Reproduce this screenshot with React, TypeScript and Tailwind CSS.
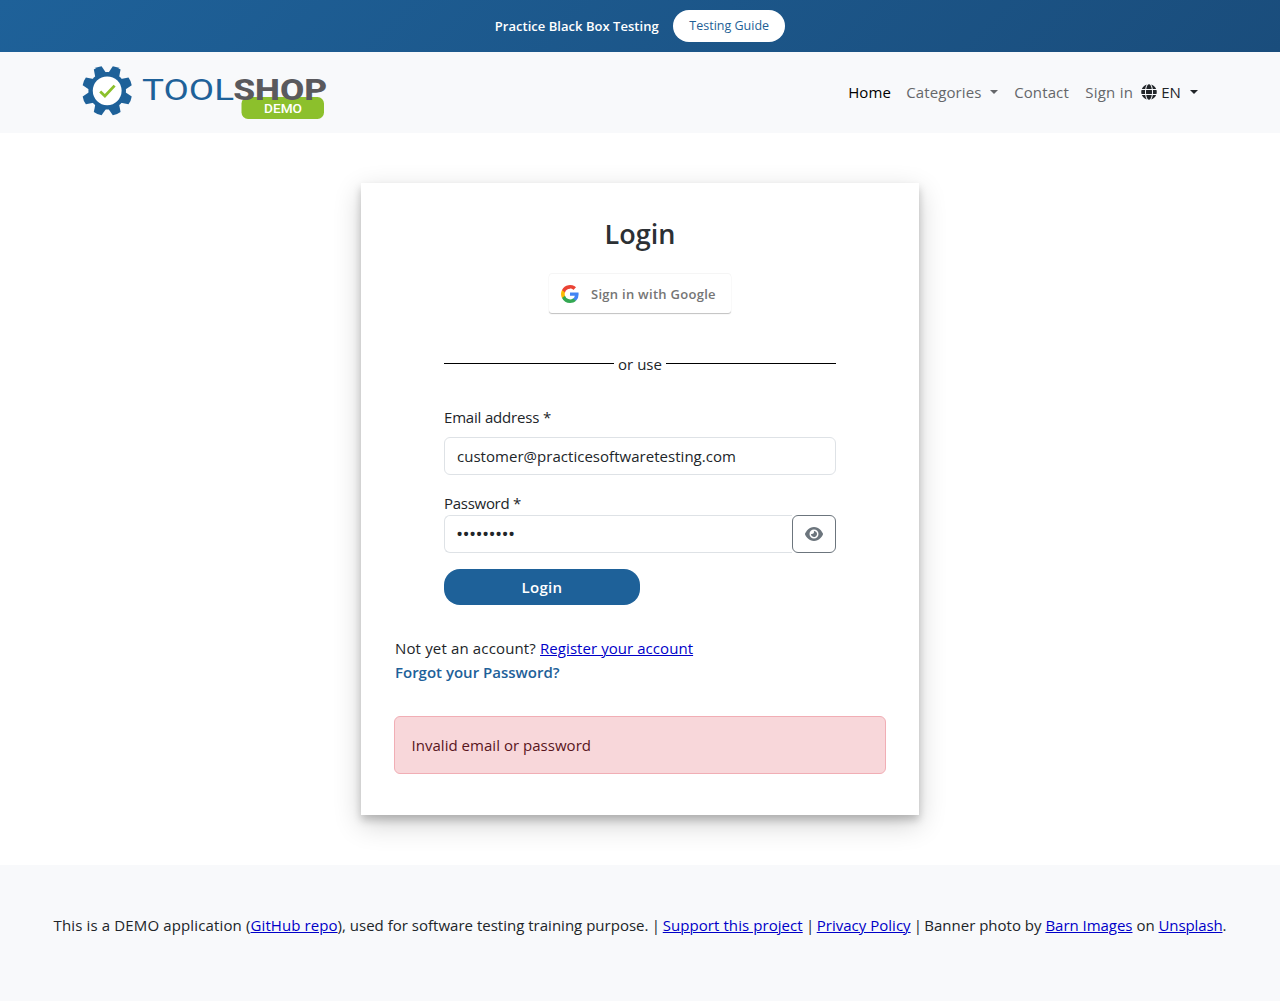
import { FaGlobe } from "react-icons/fa";
import { FaEye } from "react-icons/fa6";

const linkClass = "text-[#0000c8] underline decoration-1 underline-offset-1";

function Logo() {
  return (
    <svg width="246" height="56" viewBox="82 65 246 56" aria-label="Toolshop demo" className="block">
      <g fill="#1e6199" transform="translate(107.2 90.8)">
        {[22.5, 67.5, 112.5, 157.5, 202.5, 247.5, 292.5, 337.5].map((angle) => (
          <path key={angle} d="M-6-16 -4.2-24.8Q0-25.9 4.2-24.8L6-16Z" transform={`rotate(${angle})`} />
        ))}
        <circle r="18.8" />
        <circle r="14.4" fill="#fff" />
        <path d="M-7 .7 -2.3 5.2 7.4-5.2" fill="none" stroke="#8cc02c" strokeWidth="2.8" />
      </g>
      <rect x="241.5" y="97" width="82.5" height="22" rx="6.5" fill="#8cc02c" />
      <text x="142" y="100.3" fontSize="29" fontFamily="Roboto, sans-serif" fill="#1e6199" textLength="92" lengthAdjust="spacingAndGlyphs">TOOL</text>
      <text x="233.2" y="100.3" fontSize="29" fontWeight="800" fontFamily="Roboto, sans-serif" fill="#5a595d" textLength="94" lengthAdjust="spacingAndGlyphs">SHOP</text>
      <text x="264" y="112.5" fontSize="13.4" fontWeight="500" fontFamily="Roboto, sans-serif" fill="#fff" textLength="38" lengthAdjust="spacingAndGlyphs">DEMO</text>
    </svg>
  );
}

function GoogleMark() {
  return (
    <svg width="18" height="18" viewBox="0 0 18 18">
      <path d="M17.6 9.2l-.1-1.8H9v3.4h4.8C13.6 12 13 13 12 13.6v2.2h3a8.8 8.8 0 0 0 2.6-6.6z" fill="#4285F4" />
      <path d="M9 18c2.4 0 4.5-.8 6-2.2l-3-2.2a5.4 5.4 0 0 1-8-2.9H1V13a9 9 0 0 0 8 5z" fill="#34A853" />
      <path d="M4 10.7a5.4 5.4 0 0 1 0-3.4V5H1a9 9 0 0 0 0 8l3-2.3z" fill="#FBBC05" />
      <path d="M9 3.6c1.3 0 2.5.4 3.4 1.3L15 2.3A9 9 0 0 0 1 5l3 2.4a5.4 5.4 0 0 1 5-3.7z" fill="#EA4335" />
    </svg>
  );
}

function Caret() {
  return <span className="inline-block h-0 w-0 border-x-[4.8px] border-t-[4.8px] border-x-transparent" />;
}

export default function App() {
  return (
    <div className="flex min-h-[1001px] flex-col bg-white font-['Open_Sans',sans-serif] text-[15px] leading-6 text-[#212529]">
      <div className="flex h-[52px] items-center justify-center gap-[14.5px] bg-[linear-gradient(135deg,#1e6199_0%,#1a4d7c_100%)] text-[13px]">
        <span className="font-semibold tracking-[0.03px] text-white">Practice Black Box Testing</span>
        <a className="flex h-8 w-28 items-center justify-center rounded-full bg-white text-[12.5px] font-medium text-[#1e5f96]">Testing Guide</a>
      </div>

      <header className="h-[81px] bg-[#f8f9fb]">
        <div className="mx-auto flex w-[1116px] items-center justify-between">
          <div className="pt-[13px]"><Logo /></div>
          <nav className="flex items-center pt-[11px] text-[#65676a]">
            <a className="w-[58px] tracking-[0.1px] text-black">Home</a>
            <a className="flex w-[108px] items-center gap-[8px] tracking-[0.12px]">Categories <Caret /></a>
            <a className="w-[71px] tracking-[0.12px]">Contact</a>
            <a className="w-14 tracking-[0.25px]">Sign in</a>
            <button className="flex items-center text-[#212529]">
              <FaGlobe size={16} />
              <span className="ml-1 mr-[9px] tracking-[0.1px]">EN</span>
              <Caret />
            </button>
          </nav>
        </div>
      </header>

      <main className="flex h-[732px] justify-center pt-[50px]">
        <section className="h-[632px] w-[558px] bg-white px-[33px] shadow-[0_5px_8px_0_rgba(0,0,0,0.2),0_9px_26px_0_rgba(0,0,0,0.19)]">
          <h3 className="pt-[34px] text-center text-[27px] font-semibold leading-[34px] text-[#2c3034]">Login</h3>
          <button className="mx-auto mt-[23px] flex h-[39px] w-[182px] items-center rounded-[3px] bg-white pl-3 text-[13px] font-semibold tracking-[0.28px] text-[#757575] shadow-[0_-1px_0_rgba(0,0,0,0.04),0_1px_1px_rgba(0,0,0,0.25)]">
            <GoogleMark />
            <span className="ml-3 whitespace-nowrap">Sign in with Google</span>
          </button>

          <form className="mx-auto w-[392px] pt-[39px]">
            <div className="flex h-6 items-center justify-between">
              <span className="mb-px h-px w-[170px] bg-black" />
              <span>or use</span>
              <span className="mb-px h-px w-[170px] bg-black" />
            </div>
            <label className="mt-[29px] block tracking-[-0.18px]">Email address *</label>
            <div className="mt-2 flex h-[38px] items-center rounded-md border border-[#dee2e6] px-3 tracking-[0.03px]">customer@practicesoftwaretesting.com</div>
            <label className="mt-4 block h-6 tracking-[-0.28px]">Password *</label>
            <div className="flex h-[38px]">
              <div className="flex flex-1 items-center rounded-l-md border border-r-0 border-[#dee2e6] px-[11px] text-[19px] tracking-[-0.65px]">•••••••••</div>
              <button type="button" className="flex w-11 items-center justify-center rounded-md border border-[#6c757d] text-[#6c757d]">
                <FaEye size={18} className="h-4 w-[18px]" />
              </button>
            </div>
            <button type="button" className="mt-4 flex h-9 w-[196px] items-center justify-center rounded-2xl bg-[#1e6199] font-semibold tracking-[0.3px] text-white">Login</button>
          </form>

          <p className="mt-[31px] pl-px tracking-[0.15px]">
            Not yet an account? <a className={`${linkClass} tracking-[0.06px]`}>Register your account</a>
          </p>
          <a className="block pl-px font-semibold text-[#1e6199]">Forgot your Password?</a>
          <div className="mt-8 flex h-[58px] items-center rounded-md border border-[#f1aeb5] bg-[#f8d7da] px-[16.5px] tracking-[0.03px] text-[#58151c]">Invalid email or password</div>
        </section>
      </main>

      <footer className="flex h-[136px] justify-center whitespace-nowrap bg-[#f8f9fb] pt-12">
        <p>
          <span className="tracking-[0.14px]">This is a DEMO application (</span>
          <a className={`${linkClass} tracking-[0.08px]`}>GitHub repo</a>
          <span className="tracking-[0.01px]">), used for software testing training purpose.</span>
          <span className="tracking-[-0.6px]"> | </span>
          <a className={`${linkClass} tracking-[0.07px]`}>Support this project</a>
          <span className="tracking-[-0.7px]"> | </span>
          <a className={`${linkClass} tracking-[0.02px]`}>Privacy Policy</a>
          <span className="tracking-[-0.8px]"> | </span>
          <span>Banner photo by </span>
          <a className={`${linkClass} tracking-[-0.03px]`}>Barn Images</a>
          <span> on </span>
          <a className={`${linkClass} tracking-[-0.12px]`}>Unsplash</a>.
        </p>
      </footer>
    </div>
  );
}
